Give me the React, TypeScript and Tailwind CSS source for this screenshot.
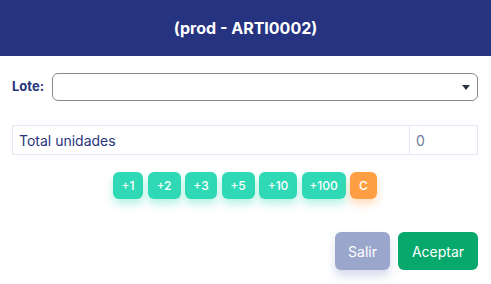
const steps = [
  { label: "+1", w: "w-[30px]" },
  { label: "+2", w: "w-[33px]" },
  { label: "+3", w: "w-[32px]" },
  { label: "+5", w: "w-[33px]" },
  { label: "+10", w: "w-[38px]" },
  { label: "+100", w: "w-[44px]" },
];

export default function App() {
  return (
    <div className="h-[284px] w-[491px] bg-white font-['Inter',sans-serif]">
      <header className="flex h-14 items-center justify-center bg-[#263381]">
        <h1 className="text-[16px] font-bold text-white">(prod - ARTI0002)</h1>
      </header>

      <div className="pl-3 pr-[13px]">
        <div className="mt-[17px] flex items-center gap-2">
          <label className="w-8 text-[13px] font-bold text-[#27347d]">Lote:</label>
          <div className="relative h-7 flex-1 rounded-md border border-[#8a8a8a] bg-white">
            <span className="absolute right-[7px] top-[11px] h-0 w-0 border-x-[4px] border-t-[5px] border-x-transparent border-t-[#2c3443]" />
          </div>
        </div>

        <div className="mt-6 flex h-[30px] border border-[#e3e9f5] text-[14px]">
          <div className="flex flex-1 items-center border-r border-[#e3e9f5] pl-[6px] text-[#27347d]">
            Total unidades
          </div>
          <div className="flex w-[67px] items-center pl-[6px] text-[#6b7a99]">0</div>
        </div>

        <div className="mt-[17px] flex justify-center gap-[4.5px]">
          {steps.map((s) => (
            <button
              key={s.label}
              className={`h-[27px] ${s.w} rounded-md bg-[#2fd9b5] text-[12px] font-medium text-white shadow-[0_5px_8px_rgba(47,217,181,0.35)]`}
            >
              {s.label}
            </button>
          ))}
          <button className="h-[27px] w-[27px] rounded-md bg-[#ff9f43] text-[12px] font-medium text-white shadow-[0_5px_8px_rgba(255,159,67,0.35)]">
            C
          </button>
        </div>

        <div className="mt-[33px] flex justify-end gap-2">
          <button className="h-[38px] w-[55px] rounded-md bg-[#9aa6cc] text-[14px] text-white shadow-[0_6px_10px_rgba(154,166,204,0.4)]">
            Salir
          </button>
          <button className="h-[38px] w-[80px] rounded-md bg-[#07a86b] text-[14px] text-white">
            Aceptar
          </button>
        </div>
      </div>
    </div>
  );
}
